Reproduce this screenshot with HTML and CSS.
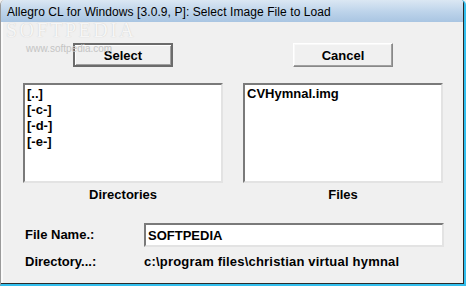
FILE: index.html
```html
<!DOCTYPE html>
<html lang="en">
<head>
  <meta charset="UTF-8">
  <title>Allegro CL for Windows - Select Image File to Load</title>
  <link rel="stylesheet" href="styles.css">
</head>
<body>
  <div class="window">
    <div class="titleBar">Allegro CL for Windows [3.0.9, P]: Select Image File to Load</div>

    <div class="content">
      <div class="pairRow buttonRow">
        <button class="btn default">Select</button>
        <button class="btn">Cancel</button>
      </div>

      <div class="pairRow">
        <div class="listBlock">
          <ul class="listBox">
            <li>[..]</li>
            <li>[-c-]</li>
            <li>[-d-]</li>
            <li>[-e-]</li>
          </ul>
          <div class="listLabel">Directories</div>
        </div>
        <div class="listBlock">
          <ul class="listBox">
            <li>CVHymnal.img</li>
          </ul>
          <div class="listLabel">Files</div>
        </div>
      </div>

      <div class="fieldGrid">
        <label class="fieldLabel" for="fileName">File Name.:</label>
        <input class="textBox" id="fileName" type="text" value="SOFTPEDIA">
        <span class="fieldLabel">Directory...:</span>
        <span class="fieldValue">c:\program files\christian virtual hymnal</span>
      </div>
    </div>

    <!-- screenshot watermark -->
    <div class="watermark">SOFTPEDIA</div>
    <div class="watermarkUrl">www.softpedia.com</div>
  </div>
</body>
</html>
```

FILE: styles.css
```css
body {
  margin: 0;
  background: #f0f0f0;
  font-family: "Liberation Sans", Arial, sans-serif;
  color: #000;
}

.window {
  position: relative;
  width: 466px;
  height: 286px;
  box-sizing: border-box;
  background: #f0f0f0;
  border-left: 1px solid #9a9a9a;
  border-right: 2px solid #33bfee;
  border-bottom: 2px solid #33bfee;
  border-top-left-radius: 5px;
  border-top-right-radius: 5px;
  box-shadow: inset -1px -1px 0 #2b2b2b, inset 2px 0 0 #fafafa;
  overflow: hidden;
}

.titleBar {
  height: 22px;
  box-sizing: border-box;
  padding: 5px 0 0 6px;
  line-height: 14px;
  font-size: 12px;
  letter-spacing: 0.08px;
  background: linear-gradient(#dbe7f3, #bcd3ea 55%, #a9c5e2);
  border-right: 1px solid #2b2b2b;
  white-space: nowrap;
}

.content {
  padding: 21px 0 0 22px;
}

.pairRow {
  display: grid;
  grid-template-columns: 200px 200px;
  column-gap: 20px;
  justify-items: center;
}

.buttonRow {
  margin-bottom: 16px;
}

.btn {
  width: 100px;
  height: 24px;
  padding: 0;
  font-family: "Liberation Sans", Arial, sans-serif;
  font-size: 13px;
  font-weight: bold;
  color: #000;
  background: #f0f0f0;
  border: 1px solid;
  border-color: #fff #888 #888 #fff;
  box-shadow: inset -1px -1px 0 #a0a0a0, inset 1px 1px 0 #f8f8f8;
}

.btn.default {
  border: 2px solid #6b6b6b;
  box-shadow: inset 1px 1px 0 #fff, inset -1px -1px 0 #a0a0a0;
}

.listBlock {
  width: 200px;
}

.listBox {
  list-style: none;
  margin: 0;
  padding: 1px 2px;
  height: 100px;
  box-sizing: border-box;
  background: #fff;
  border: 2px solid;
  border-color: #7a7a7a #e3e3e3 #e3e3e3 #7a7a7a;
  font-size: 13px;
  font-weight: bold;
  line-height: 16px;
}

.listLabel {
  margin-top: 4px;
  text-align: center;
  font-size: 13px;
  font-weight: bold;
  line-height: 16px;
}

.fieldGrid {
  display: grid;
  grid-template-columns: 119px 300px;
  row-gap: 7px;
  align-items: center;
  margin-top: 20px;
  padding-left: 2px;
}

.fieldLabel,
.fieldValue {
  font-size: 13px;
  font-weight: bold;
  line-height: 16px;
}

.fieldValue {
  letter-spacing: 0.2px;
}

.textBox {
  height: 24px;
  box-sizing: border-box;
  width: 300px;
  margin: 0;
  padding: 0 2px;
  font-family: "Liberation Sans", Arial, sans-serif;
  font-size: 13px;
  font-weight: bold;
  color: #000;
  background: #fff;
  border: 2px solid;
  border-color: #7a7a7a #e3e3e3 #e3e3e3 #7a7a7a;
  outline: none;
}

.watermark {
  position: absolute;
  left: 5px;
  top: 23px;
  font-family: "Liberation Serif", serif;
  font-size: 20px;
  line-height: 14px;
  letter-spacing: 2.5px;
  color: #f6f6f6;
  text-shadow: 0 0 1px #c4c4c4;
}

.watermarkUrl {
  position: absolute;
  left: 25px;
  top: 43px;
  font-size: 10px;
  color: #c4c4c4;
}
```
